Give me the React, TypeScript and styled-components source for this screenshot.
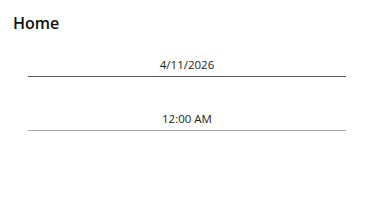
import React from "react";
import styled, { createGlobalStyle } from "styled-components";

const Global = createGlobalStyle`
  html, body { margin: 0; padding: 0; background: #fff; }
  body { font-family: "Open Sans", "Noto Sans", sans-serif; color: #222; }
`;

const Page = styled.div`
  width: 375px;
  height: 208px;
  box-sizing: border-box;
  padding: 11px 0 0 0;
  display: flex;
  flex-direction: column;
`;

const Title = styled.h1`
  margin: 0 0 0 13px;
  font-size: 16px;
  font-weight: 600;
  line-height: 24px;
  color: #111;
`;

const Fields = styled.div`
  display: flex;
  flex-direction: column;
  gap: 30px;
  margin: 18px 29px 0 28px;
`;

const Field = styled.div<{ $line: string }>`
  height: 23px;
  border-bottom: 1px solid ${(p) => p.$line};
  display: flex;
  align-items: center;
  justify-content: center;
  font-size: 11.5px;
  color: #222;
`;

export default function App() {
  return (
    <>
      <Global />
      <Page>
        <Title>Home</Title>
        <Fields>
          <Field $line="#555">4/11/2026</Field>
          <Field $line="#aaa">12:00 AM</Field>
        </Fields>
      </Page>
    </>
  );
}
